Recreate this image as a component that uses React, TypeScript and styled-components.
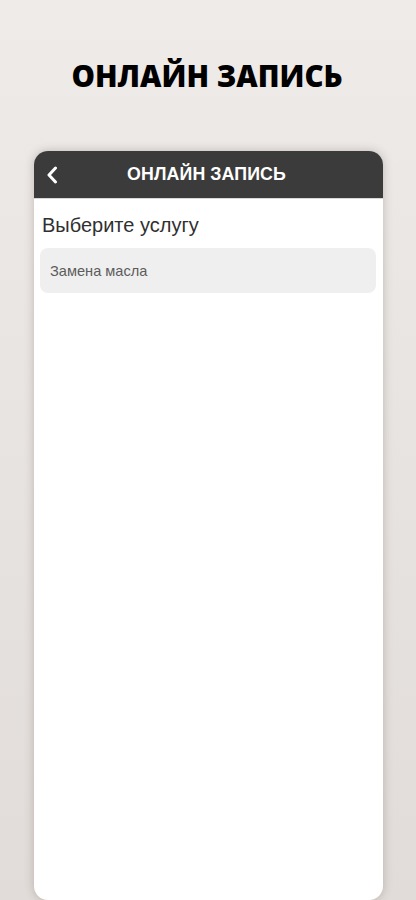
import styled, { createGlobalStyle } from 'styled-components';

const GlobalStyle = createGlobalStyle`
  html, body {
    margin: 0;
    padding: 0;
  }
  body {
    background: linear-gradient(180deg, #eeebe9 0%, #e6e2df 60%, #e1dcd9 100%);
    font-family: "Liberation Sans", Arial, sans-serif;
  }
`;

const Page = styled.div`
  width: 416px;
  height: 900px;
  overflow: hidden;
  display: flex;
  flex-direction: column;
  align-items: center;
`;

const Title = styled.h1`
  margin: 55px 0 0;
  font-family: "Open Sans", sans-serif;
  font-weight: 800;
  font-size: 29.5px;
  line-height: 42px;
  color: #000;
  letter-spacing: 0;
  margin-right: 2px;
`;

const Phone = styled.div`
  margin-top: 54px;
  margin-left: 1px;
  width: 349px;
  height: 749px;
  flex-shrink: 0;
  background: #fff;
  border-radius: 14px;
  overflow: hidden;
  box-shadow: 0 0 10px rgba(80, 60, 50, 0.28);
  display: flex;
  flex-direction: column;
`;

const Header = styled.div`
  height: 47px;
  background: #3b3b3b;
  display: flex;
  align-items: center;
  position: relative;
  justify-content: center;
  border-bottom: 1px solid #d8d8d8;
`;

const BackButton = styled.div`
  position: absolute;
  left: 10px;
  top: 14px;
  width: 16px;
  height: 20px;
  display: flex;
  align-items: center;
  justify-content: center;
`;

const HeaderTitle = styled.div`
  color: #fff;
  font-weight: 700;
  font-size: 17.8px;
  letter-spacing: 0.1px;
  margin-right: 4px;
`;

const Content = styled.div`
  padding: 14px 7px 0 6px;
  display: flex;
  flex-direction: column;
`;

const SectionLabel = styled.div`
  font-size: 20px;
  color: #303030;
  padding-left: 2px;
  line-height: 24px;
  margin-bottom: 11px;
`;

const ServiceItem = styled.div`
  height: 45px;
  background: #efefef;
  border-radius: 8px;
  display: flex;
  align-items: center;
  padding-left: 10px;
  font-size: 14.6px;
  color: #5c5c5c;
`;

export default function App() {
  return (
    <>
      <GlobalStyle />
      <Page>
        <Title>ОНЛАЙН ЗАПИСЬ</Title>
        <Phone>
          <Header>
            <BackButton>
              <svg width="12" height="18" viewBox="0 0 12 18">
                <path d="M9.5 2 L3 9 L9.5 16" fill="none" stroke="#fff" strokeWidth="3" strokeLinecap="round" strokeLinejoin="round" />
              </svg>
            </BackButton>
            <HeaderTitle>ОНЛАЙН ЗАПИСЬ</HeaderTitle>
          </Header>
          <Content>
            <SectionLabel>Выберите услугу</SectionLabel>
            <ServiceItem>Замена масла</ServiceItem>
          </Content>
        </Phone>
      </Page>
    </>
  );
}
